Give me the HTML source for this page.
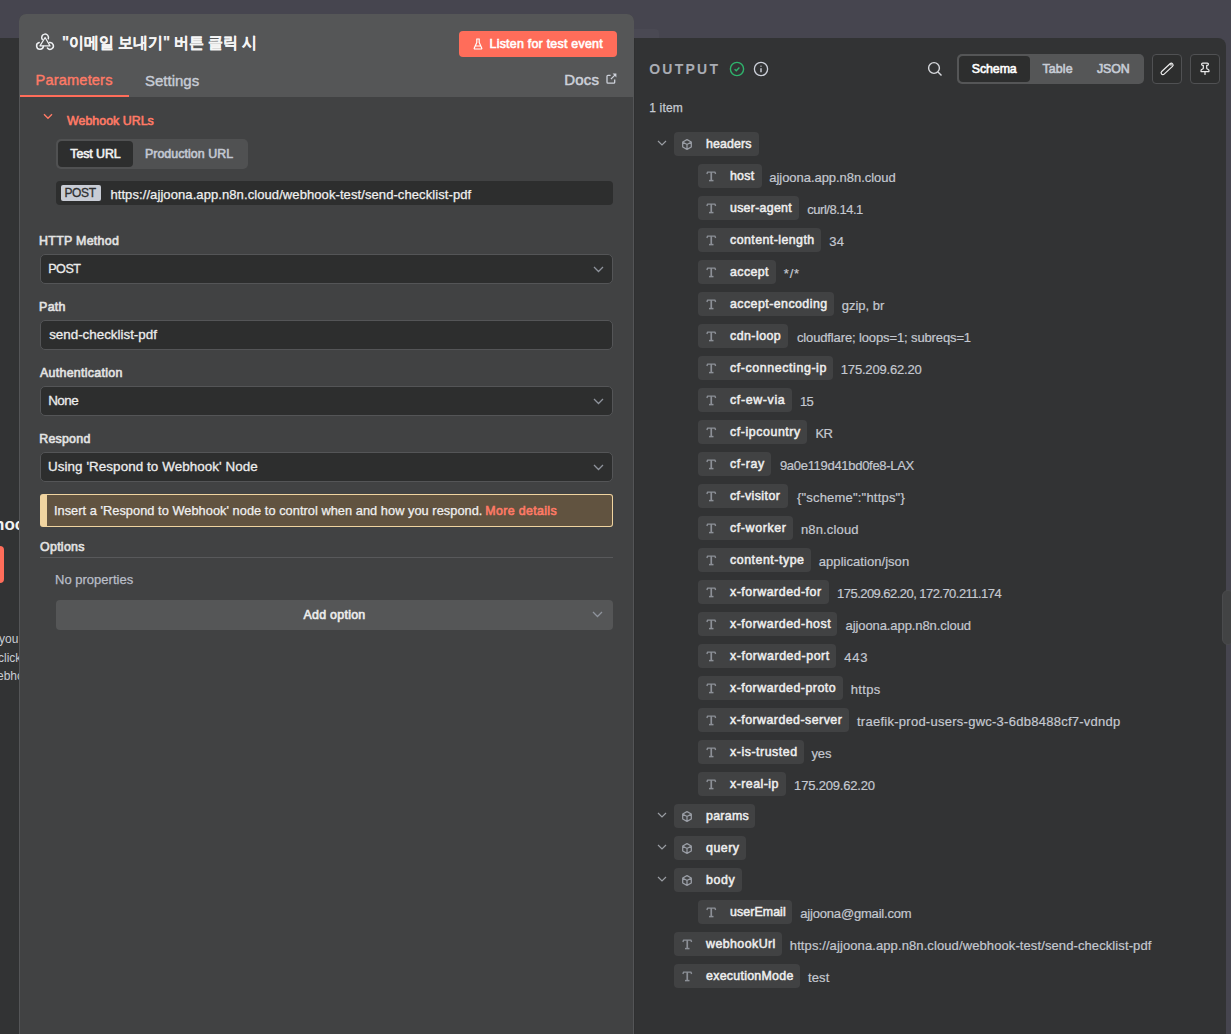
<!DOCTYPE html>
<html><head><meta charset="utf-8">
<style>
*{box-sizing:border-box;margin:0;padding:0}
html,body{width:1231px;height:1034px;overflow:hidden}
body{position:relative;background:#323334;font-family:"Liberation Sans",sans-serif;color:#e6e6e6}
.abs{position:absolute}
#topbar{position:absolute;left:0;top:0;width:1231px;height:38px;background:#46454f}
#topghost{position:absolute;left:634px;top:29px;width:25px;height:9px;background:#4a4953;border-top-right-radius:4px}
#rstrip{position:absolute;left:1190px;top:38px;width:41px;height:996px;background:#46454f}
#handle{position:absolute;left:1222px;top:590px;width:12px;height:55px;background:#424344;border-radius:6px;border:1px solid #4a4b4d}
/* left canvas peek */
#peek1{position:absolute;left:-6px;top:515px;font-size:17px;font-weight:700;color:#f2f2f2;white-space:nowrap}
#peekbtn{position:absolute;left:-10px;top:546px;width:14px;height:37px;background:#ff6d5a;border-radius:4px}
.peekt{position:absolute;font-size:12px;color:#c9ccd3;white-space:nowrap}
/* output panel */
#out{position:absolute;left:634px;top:38px;width:592px;height:996px;background:#323334;border-top-right-radius:8px}
/* left panel */
#ndv{position:absolute;left:19px;top:14px;width:615px;height:1030px;background:#414243;border-top-left-radius:7px;border-top-right-radius:7px;overflow:hidden}
#ndvhead{position:absolute;left:0;top:0;width:615px;height:83px;background:#555657}
#ndvrline{position:absolute;left:614px;top:83px;width:1px;height:960px;background:#545557}
.title{position:absolute;top:19px;font-size:16px;font-weight:700;color:#f5f5f5;white-space:nowrap;-webkit-text-stroke-width:0.15px}
.btn-listen{position:absolute;left:440px;top:17px;width:158px;height:26px;background:#ff6d5a;border-radius:4px;color:#fff;font-size:12.4px;font-weight:400;-webkit-text-stroke-width:0.6px;white-space:nowrap}
.btn-listen span{position:absolute;top:6px}
.btn-listen svg{position:absolute;left:14px;top:7px}
.tab{position:absolute;top:57.6px;font-size:14.6px;white-space:nowrap;-webkit-text-stroke-width:0.4px}
.tab.act{color:#ff7a66}
.tab.in{color:#c7ccd6;font-size:15px}
#uline{position:absolute;left:1px;top:81px;width:109px;height:2px;background:#ff6d5a}
.docs{position:absolute;top:57.2px;font-size:15px;color:#cdd1da;-webkit-text-stroke-width:0.5px}
.lab{position:absolute;left:21px;font-size:12.4px;font-weight:400;-webkit-text-stroke-width:0.6px;color:#e3e3e3;white-space:nowrap}
.inp{position:absolute;left:21px;width:573px;height:30px;background:#2d2e2e;border:1px solid #545557;border-radius:5px}
.inp span{position:absolute;top:6.4px;font-size:13.4px;color:#ececec;white-space:nowrap;-webkit-text-stroke:0.3px #ececec}
.inp svg{position:absolute;right:8.5px;top:11px}
</style></head><body>
<div id="topbar"></div>
<div id="topghost"></div>
<div id="rstrip"></div>
<div id="out"></div><div class="abs" style="left:634px;top:38px;width:1px;height:996px;background:#2f3031"></div>
<div id="handle"></div>

<div id="peek1">hook</div>
<div id="peekbtn"></div>
<div class="peekt" style="left:-1px;top:632px">you</div>
<div class="peekt" style="left:-2px;top:651px">click</div>
<div class="peekt" style="left:-3px;top:669px">ebho</div>

<!-- OUTPUT header -->
<div class="abs" style="left:649.20px;letter-spacing:2.260px;top:61px;font-size:14px;font-weight:700;color:#a9acb3">OUTPUT</div>
<svg class="abs" style="left:729px;top:61px" width="16" height="16" viewBox="0 0 16 16"><circle cx="8" cy="8" r="6.6" fill="none" stroke="#2fb36c" stroke-width="1.4"/><path d="M5.6 8.2l1.7 1.6 3.1-3.2" fill="none" stroke="#2fb36c" stroke-width="1.4"/></svg>
<svg class="abs" style="left:753px;top:61px" width="16" height="16" viewBox="0 0 16 16"><circle cx="8" cy="8" r="6.6" fill="none" stroke="#cdd1da" stroke-width="1.3"/><path d="M8 7.3v3.9" stroke="#cdd1da" stroke-width="1.4"/><path d="M7.3 5.2h1.4" stroke="#cdd1da" stroke-width="0.9"/></svg>
<div class="abs" style="left:649.20px;letter-spacing:0.200px;top:101px;font-size:12px;-webkit-text-stroke-width:0.25px;color:#c6cad2;white-space:nowrap">1 item</div>
<svg class="abs" style="left:927px;top:61px" width="16" height="16" viewBox="0 0 16 16"><circle cx="7" cy="7" r="5.4" fill="none" stroke="#d6d8dc" stroke-width="1.4"/><path d="M11 11l3.5 3.5" stroke="#d6d8dc" stroke-width="1.4"/></svg>
<div class="abs" style="left:957px;top:54px;width:187px;height:30px;background:#555657;border-radius:5px"></div>
<div class="abs" style="left:959px;top:56px;width:71px;height:26px;background:#2d2e2e;border-radius:4px"></div>
<div class="abs" style="left:971.80px;letter-spacing:-0.100px;top:62px;font-size:12.4px;font-weight:400;-webkit-text-stroke-width:0.6px;color:#fff">Schema</div>
<div class="abs" style="left:1042.50px;letter-spacing:0.100px;top:62px;font-size:12.4px;font-weight:400;-webkit-text-stroke-width:0.6px;color:#c7ccd6">Table</div>
<div class="abs" style="left:1096.90px;letter-spacing:-0.067px;top:62px;font-size:12.4px;font-weight:400;-webkit-text-stroke-width:0.6px;color:#c7ccd6">JSON</div>
<div class="abs" style="left:1152px;top:54px;width:30px;height:30px;background:#2d2e2e;border:1px solid #505153;border-radius:4px"></div>
<svg class="abs" style="left:1159px;top:61px" width="16" height="16" viewBox="0 0 16 16"><g transform="rotate(-43 8.1 7.95)"><rect x="0.6" y="6.15" width="15" height="3.6" rx="1.8" fill="none" stroke="#ececec" stroke-width="1.2"/></g><circle cx="12" cy="3.8" r="0.85" fill="#ececec"/></svg>
<div class="abs" style="left:1190px;top:54px;width:30px;height:30px;background:#2d2e2e;border:1px solid #505153;border-radius:4px"></div>
<svg class="abs" style="left:1197px;top:61px" width="16" height="16" viewBox="0 0 24 24" style="overflow:visible"><g transform="translate(1.8 1.4) scale(0.85 0.85)" fill="none" stroke="#ececec" stroke-width="2.1" stroke-linejoin="round" stroke-linecap="round"><line x1="12" x2="12" y1="17" y2="22"/><path d="M5 17h14v-1.76a2 2 0 0 0-1.11-1.79l-1.78-.9A2 2 0 0 1 15 10.76V6h1a2 2 0 0 0 0-4H8a2 2 0 0 0 0 4h1v4.76a2 2 0 0 1-1.11 1.79l-1.78.9A2 2 0 0 0 5 15.24Z"/></g></svg>

<style>
.row{position:absolute;height:24px;white-space:nowrap;display:flex;align-items:flex-start}
.pill{position:relative;display:block;height:24px;background:#414243;border-radius:4px;padding-left:32px;padding-right:7px}
.pill .k{display:block;padding-top:5px;line-height:14px;font-size:12.4px;font-weight:400;color:#eeeeee;-webkit-text-stroke:0.5px #eeeeee}
.pill svg.ti{position:absolute;left:8px;top:6.8px}
.pill svg.ci{position:absolute;left:7px;top:5.5px}
.v{display:block;padding-top:6px;line-height:15px;font-size:13px;color:#c4c8d0;-webkit-text-stroke:0.2px #c4c8d0}
.tchw{position:absolute;line-height:0}
</style>
<div class="tchw" style="top:140px;left:657px"><svg class="tch" width="10" height="6" viewBox="0 0 10 6"><path d="M1 1l4 4 4-4" fill="none" stroke="#9a9da3" stroke-width="1.2"/></svg></div><div class="row" style="top:132px;left:674px"><span class="pill" style="width:85px"><svg class="ci" width="12" height="13" viewBox="0 0 12 13"><path d="M6 1.6 10.3 4v5L6 11.4 1.7 9V4z M1.7 4 6 6.5 10.3 4M6 6.5v4.9" fill="none" stroke="#9a9ea6" stroke-width="1.25" stroke-linejoin="round"/></svg><span class="k" style="letter-spacing:0.117px">headers</span></span></div>
<div class="row" style="top:164px;left:698px"><span class="pill" style="width:64px"><svg class="ti" width="11" height="11" viewBox="0 0 11 11"><g fill="none" stroke="#8c9097" stroke-linecap="butt"><path d="M0.9 2.9 L1.6 1.1 H8.9 L9.6 2.9" stroke-width="1.4" stroke-linejoin="round"/><path d="M5.25 1.1V9.6" stroke-width="1.7"/><path d="M3 9.6H7.5" stroke-width="1.5"/></g></svg><span class="k" style="letter-spacing:0.233px">host</span></span><span class="v" style="margin-left:7.3px;letter-spacing:-0.045px">ajjoona.app.n8n.cloud</span></div>
<div class="row" style="top:196px;left:698px"><span class="pill" style="width:101px"><svg class="ti" width="11" height="11" viewBox="0 0 11 11"><g fill="none" stroke="#8c9097" stroke-linecap="butt"><path d="M0.9 2.9 L1.6 1.1 H8.9 L9.6 2.9" stroke-width="1.4" stroke-linejoin="round"/><path d="M5.25 1.1V9.6" stroke-width="1.7"/><path d="M3 9.6H7.5" stroke-width="1.5"/></g></svg><span class="k" style="letter-spacing:0.267px">user-agent</span></span><span class="v" style="margin-left:8.3px;letter-spacing:-0.470px">curl/8.14.1</span></div>
<div class="row" style="top:228px;left:698px"><span class="pill" style="width:123px"><svg class="ti" width="11" height="11" viewBox="0 0 11 11"><g fill="none" stroke="#8c9097" stroke-linecap="butt"><path d="M0.9 2.9 L1.6 1.1 H8.9 L9.6 2.9" stroke-width="1.4" stroke-linejoin="round"/><path d="M5.25 1.1V9.6" stroke-width="1.7"/><path d="M3 9.6H7.5" stroke-width="1.5"/></g></svg><span class="k" style="letter-spacing:0.438px">content-length</span></span><span class="v" style="margin-left:8.2px;letter-spacing:0.300px">34</span></div>
<div class="row" style="top:260px;left:698px"><span class="pill" style="width:78px"><svg class="ti" width="11" height="11" viewBox="0 0 11 11"><g fill="none" stroke="#8c9097" stroke-linecap="butt"><path d="M0.9 2.9 L1.6 1.1 H8.9 L9.6 2.9" stroke-width="1.4" stroke-linejoin="round"/><path d="M5.25 1.1V9.6" stroke-width="1.7"/><path d="M3 9.6H7.5" stroke-width="1.5"/></g></svg><span class="k" style="letter-spacing:0.400px">accept</span></span><span class="v" style="margin-left:7.8px;letter-spacing:0.800px">*/*</span></div>
<div class="row" style="top:292px;left:698px"><span class="pill" style="width:136px"><svg class="ti" width="11" height="11" viewBox="0 0 11 11"><g fill="none" stroke="#8c9097" stroke-linecap="butt"><path d="M0.9 2.9 L1.6 1.1 H8.9 L9.6 2.9" stroke-width="1.4" stroke-linejoin="round"/><path d="M5.25 1.1V9.6" stroke-width="1.7"/><path d="M3 9.6H7.5" stroke-width="1.5"/></g></svg><span class="k" style="letter-spacing:0.443px">accept-encoding</span></span><span class="v" style="margin-left:7.8px;letter-spacing:-0.014px">gzip, br</span></div>
<div class="row" style="top:324px;left:698px"><span class="pill" style="width:90px"><svg class="ti" width="11" height="11" viewBox="0 0 11 11"><g fill="none" stroke="#8c9097" stroke-linecap="butt"><path d="M0.9 2.9 L1.6 1.1 H8.9 L9.6 2.9" stroke-width="1.4" stroke-linejoin="round"/><path d="M5.25 1.1V9.6" stroke-width="1.7"/><path d="M3 9.6H7.5" stroke-width="1.5"/></g></svg><span class="k" style="letter-spacing:0.457px">cdn-loop</span></span><span class="v" style="margin-left:8.9px;letter-spacing:-0.124px">cloudflare; loops=1; subreqs=1</span></div>
<div class="row" style="top:356px;left:698px"><span class="pill" style="width:135px"><svg class="ti" width="11" height="11" viewBox="0 0 11 11"><g fill="none" stroke="#8c9097" stroke-linecap="butt"><path d="M0.9 2.9 L1.6 1.1 H8.9 L9.6 2.9" stroke-width="1.4" stroke-linejoin="round"/><path d="M5.25 1.1V9.6" stroke-width="1.7"/><path d="M3 9.6H7.5" stroke-width="1.5"/></g></svg><span class="k" style="letter-spacing:0.593px">cf-connecting-ip</span></span><span class="v" style="margin-left:7.8px;letter-spacing:-0.183px">175.209.62.20</span></div>
<div class="row" style="top:388px;left:698px"><span class="pill" style="width:94px"><svg class="ti" width="11" height="11" viewBox="0 0 11 11"><g fill="none" stroke="#8c9097" stroke-linecap="butt"><path d="M0.9 2.9 L1.6 1.1 H8.9 L9.6 2.9" stroke-width="1.4" stroke-linejoin="round"/><path d="M5.25 1.1V9.6" stroke-width="1.7"/><path d="M3 9.6H7.5" stroke-width="1.5"/></g></svg><span class="k" style="letter-spacing:0.638px">cf-ew-via</span></span><span class="v" style="margin-left:8.1px;letter-spacing:-0.800px">15</span></div>
<div class="row" style="top:420px;left:698px"><span class="pill" style="width:109px"><svg class="ti" width="11" height="11" viewBox="0 0 11 11"><g fill="none" stroke="#8c9097" stroke-linecap="butt"><path d="M0.9 2.9 L1.6 1.1 H8.9 L9.6 2.9" stroke-width="1.4" stroke-linejoin="round"/><path d="M5.25 1.1V9.6" stroke-width="1.7"/><path d="M3 9.6H7.5" stroke-width="1.5"/></g></svg><span class="k" style="letter-spacing:0.564px">cf-ipcountry</span></span><span class="v" style="margin-left:8.6px;letter-spacing:-0.800px">KR</span></div>
<div class="row" style="top:452px;left:698px"><span class="pill" style="width:73px"><svg class="ti" width="11" height="11" viewBox="0 0 11 11"><g fill="none" stroke="#8c9097" stroke-linecap="butt"><path d="M0.9 2.9 L1.6 1.1 H8.9 L9.6 2.9" stroke-width="1.4" stroke-linejoin="round"/><path d="M5.25 1.1V9.6" stroke-width="1.7"/><path d="M3 9.6H7.5" stroke-width="1.5"/></g></svg><span class="k" style="letter-spacing:0.660px">cf-ray</span></span><span class="v" style="margin-left:8.9px;letter-spacing:-0.295px">9a0e119d41bd0fe8-LAX</span></div>
<div class="row" style="top:484px;left:698px"><span class="pill" style="width:90px"><svg class="ti" width="11" height="11" viewBox="0 0 11 11"><g fill="none" stroke="#8c9097" stroke-linecap="butt"><path d="M0.9 2.9 L1.6 1.1 H8.9 L9.6 2.9" stroke-width="1.4" stroke-linejoin="round"/><path d="M5.25 1.1V9.6" stroke-width="1.7"/><path d="M3 9.6H7.5" stroke-width="1.5"/></g></svg><span class="k" style="letter-spacing:0.411px">cf-visitor</span></span><span class="v" style="margin-left:8.9px;letter-spacing:0.200px">{&quot;scheme&quot;:&quot;https&quot;}</span></div>
<div class="row" style="top:516px;left:698px"><span class="pill" style="width:95px"><svg class="ti" width="11" height="11" viewBox="0 0 11 11"><g fill="none" stroke="#8c9097" stroke-linecap="butt"><path d="M0.9 2.9 L1.6 1.1 H8.9 L9.6 2.9" stroke-width="1.4" stroke-linejoin="round"/><path d="M5.25 1.1V9.6" stroke-width="1.7"/><path d="M3 9.6H7.5" stroke-width="1.5"/></g></svg><span class="k" style="letter-spacing:0.612px">cf-worker</span></span><span class="v" style="margin-left:8.0px;letter-spacing:0.138px">n8n.cloud</span></div>
<div class="row" style="top:548px;left:698px"><span class="pill" style="width:113px"><svg class="ti" width="11" height="11" viewBox="0 0 11 11"><g fill="none" stroke="#8c9097" stroke-linecap="butt"><path d="M0.9 2.9 L1.6 1.1 H8.9 L9.6 2.9" stroke-width="1.4" stroke-linejoin="round"/><path d="M5.25 1.1V9.6" stroke-width="1.7"/><path d="M3 9.6H7.5" stroke-width="1.5"/></g></svg><span class="k" style="letter-spacing:0.527px">content-type</span></span><span class="v" style="margin-left:7.8px;letter-spacing:0.047px">application/json</span></div>
<div class="row" style="top:580px;left:698px"><span class="pill" style="width:131px"><svg class="ti" width="11" height="11" viewBox="0 0 11 11"><g fill="none" stroke="#8c9097" stroke-linecap="butt"><path d="M0.9 2.9 L1.6 1.1 H8.9 L9.6 2.9" stroke-width="1.4" stroke-linejoin="round"/><path d="M5.25 1.1V9.6" stroke-width="1.7"/><path d="M3 9.6H7.5" stroke-width="1.5"/></g></svg><span class="k" style="letter-spacing:0.500px">x-forwarded-for</span></span><span class="v" style="margin-left:8.1px;letter-spacing:-0.543px">175.209.62.20, 172.70.211.174</span></div>
<div class="row" style="top:612px;left:698px"><span class="pill" style="width:139px"><svg class="ti" width="11" height="11" viewBox="0 0 11 11"><g fill="none" stroke="#8c9097" stroke-linecap="butt"><path d="M0.9 2.9 L1.6 1.1 H8.9 L9.6 2.9" stroke-width="1.4" stroke-linejoin="round"/><path d="M5.25 1.1V9.6" stroke-width="1.7"/><path d="M3 9.6H7.5" stroke-width="1.5"/></g></svg><span class="k" style="letter-spacing:0.507px">x-forwarded-host</span></span><span class="v" style="margin-left:8.5px;letter-spacing:-0.085px">ajjoona.app.n8n.cloud</span></div>
<div class="row" style="top:644px;left:698px"><span class="pill" style="width:138px"><svg class="ti" width="11" height="11" viewBox="0 0 11 11"><g fill="none" stroke="#8c9097" stroke-linecap="butt"><path d="M0.9 2.9 L1.6 1.1 H8.9 L9.6 2.9" stroke-width="1.4" stroke-linejoin="round"/><path d="M5.25 1.1V9.6" stroke-width="1.7"/><path d="M3 9.6H7.5" stroke-width="1.5"/></g></svg><span class="k" style="letter-spacing:0.553px">x-forwarded-port</span></span><span class="v" style="margin-left:8.3px;letter-spacing:0.800px">443</span></div>
<div class="row" style="top:676px;left:698px"><span class="pill" style="width:145px"><svg class="ti" width="11" height="11" viewBox="0 0 11 11"><g fill="none" stroke="#8c9097" stroke-linecap="butt"><path d="M0.9 2.9 L1.6 1.1 H8.9 L9.6 2.9" stroke-width="1.4" stroke-linejoin="round"/><path d="M5.25 1.1V9.6" stroke-width="1.7"/><path d="M3 9.6H7.5" stroke-width="1.5"/></g></svg><span class="k" style="letter-spacing:0.487px">x-forwarded-proto</span></span><span class="v" style="margin-left:7.8px;letter-spacing:0.325px">https</span></div>
<div class="row" style="top:708px;left:698px"><span class="pill" style="width:151px"><svg class="ti" width="11" height="11" viewBox="0 0 11 11"><g fill="none" stroke="#8c9097" stroke-linecap="butt"><path d="M0.9 2.9 L1.6 1.1 H8.9 L9.6 2.9" stroke-width="1.4" stroke-linejoin="round"/><path d="M5.25 1.1V9.6" stroke-width="1.7"/><path d="M3 9.6H7.5" stroke-width="1.5"/></g></svg><span class="k" style="letter-spacing:0.459px">x-forwarded-server</span></span><span class="v" style="margin-left:8.0px;letter-spacing:0.260px">traefik-prod-users-gwc-3-6db8488cf7-vdndp</span></div>
<div class="row" style="top:740px;left:698px"><span class="pill" style="width:106px"><svg class="ti" width="11" height="11" viewBox="0 0 11 11"><g fill="none" stroke="#8c9097" stroke-linecap="butt"><path d="M0.9 2.9 L1.6 1.1 H8.9 L9.6 2.9" stroke-width="1.4" stroke-linejoin="round"/><path d="M5.25 1.1V9.6" stroke-width="1.7"/><path d="M3 9.6H7.5" stroke-width="1.5"/></g></svg><span class="k" style="letter-spacing:0.527px">x-is-trusted</span></span><span class="v" style="margin-left:7.5px;letter-spacing:-0.150px">yes</span></div>
<div class="row" style="top:772px;left:698px"><span class="pill" style="width:88px"><svg class="ti" width="11" height="11" viewBox="0 0 11 11"><g fill="none" stroke="#8c9097" stroke-linecap="butt"><path d="M0.9 2.9 L1.6 1.1 H8.9 L9.6 2.9" stroke-width="1.4" stroke-linejoin="round"/><path d="M5.25 1.1V9.6" stroke-width="1.7"/><path d="M3 9.6H7.5" stroke-width="1.5"/></g></svg><span class="k" style="letter-spacing:0.450px">x-real-ip</span></span><span class="v" style="margin-left:8.1px;letter-spacing:-0.183px">175.209.62.20</span></div>
<div class="tchw" style="top:812px;left:657px"><svg class="tch" width="10" height="6" viewBox="0 0 10 6"><path d="M1 1l4 4 4-4" fill="none" stroke="#9a9da3" stroke-width="1.2"/></svg></div><div class="row" style="top:804px;left:674px"><span class="pill" style="width:81px"><svg class="ci" width="12" height="13" viewBox="0 0 12 13"><path d="M6 1.6 10.3 4v5L6 11.4 1.7 9V4z M1.7 4 6 6.5 10.3 4M6 6.5v4.9" fill="none" stroke="#9a9ea6" stroke-width="1.25" stroke-linejoin="round"/></svg><span class="k" style="letter-spacing:0.280px">params</span></span></div>
<div class="tchw" style="top:844px;left:657px"><svg class="tch" width="10" height="6" viewBox="0 0 10 6"><path d="M1 1l4 4 4-4" fill="none" stroke="#9a9da3" stroke-width="1.2"/></svg></div><div class="row" style="top:836px;left:674px"><span class="pill" style="width:72px"><svg class="ci" width="12" height="13" viewBox="0 0 12 13"><path d="M6 1.6 10.3 4v5L6 11.4 1.7 9V4z M1.7 4 6 6.5 10.3 4M6 6.5v4.9" fill="none" stroke="#9a9ea6" stroke-width="1.25" stroke-linejoin="round"/></svg><span class="k" style="letter-spacing:0.500px">query</span></span></div>
<div class="tchw" style="top:876px;left:657px"><svg class="tch" width="10" height="6" viewBox="0 0 10 6"><path d="M1 1l4 4 4-4" fill="none" stroke="#9a9da3" stroke-width="1.2"/></svg></div><div class="row" style="top:868px;left:674px"><span class="pill" style="width:68px"><svg class="ci" width="12" height="13" viewBox="0 0 12 13"><path d="M6 1.6 10.3 4v5L6 11.4 1.7 9V4z M1.7 4 6 6.5 10.3 4M6 6.5v4.9" fill="none" stroke="#9a9ea6" stroke-width="1.25" stroke-linejoin="round"/></svg><span class="k" style="letter-spacing:0.633px">body</span></span></div>
<div class="row" style="top:900px;left:698px"><span class="pill" style="width:94px"><svg class="ti" width="11" height="11" viewBox="0 0 11 11"><g fill="none" stroke="#8c9097" stroke-linecap="butt"><path d="M0.9 2.9 L1.6 1.1 H8.9 L9.6 2.9" stroke-width="1.4" stroke-linejoin="round"/><path d="M5.25 1.1V9.6" stroke-width="1.7"/><path d="M3 9.6H7.5" stroke-width="1.5"/></g></svg><span class="k" style="letter-spacing:0.075px">userEmail</span></span><span class="v" style="margin-left:8.3px;letter-spacing:-0.188px">ajjoona@gmail.com</span></div>
<div class="row" style="top:932px;left:674px"><span class="pill" style="width:108px"><svg class="ti" width="11" height="11" viewBox="0 0 11 11"><g fill="none" stroke="#8c9097" stroke-linecap="butt"><path d="M0.9 2.9 L1.6 1.1 H8.9 L9.6 2.9" stroke-width="1.4" stroke-linejoin="round"/><path d="M5.25 1.1V9.6" stroke-width="1.7"/><path d="M3 9.6H7.5" stroke-width="1.5"/></g></svg><span class="k" style="letter-spacing:0.433px">webhookUrl</span></span><span class="v" style="margin-left:7.8px;letter-spacing:0.100px">https://ajjoona.app.n8n.cloud/webhook-test/send-checklist-pdf</span></div>
<div class="row" style="top:964px;left:674px"><span class="pill" style="width:126px"><svg class="ti" width="11" height="11" viewBox="0 0 11 11"><g fill="none" stroke="#8c9097" stroke-linecap="butt"><path d="M0.9 2.9 L1.6 1.1 H8.9 L9.6 2.9" stroke-width="1.4" stroke-linejoin="round"/><path d="M5.25 1.1V9.6" stroke-width="1.7"/><path d="M3 9.6H7.5" stroke-width="1.5"/></g></svg><span class="k" style="letter-spacing:0.275px">executionMode</span></span><span class="v" style="margin-left:8.0px;letter-spacing:0.100px">test</span></div>

<!-- left NDV panel -->
<div id="ndv">
  <div id="ndvhead"></div>
  <div id="ndvrline"></div><div class="abs" style="left:0;top:83px;width:1px;height:960px;background:#545557"></div>
  <svg class="abs" style="left:13px;top:15px" width="26" height="26" viewBox="0 0 26 26"><g fill="none" stroke="#eef0f3" stroke-linecap="round" stroke-linejoin="round"><path stroke-width="1.5" d="M10.315 10.451A3.4 3.4 0 1 1 16.295 9.663"/><path stroke-width="1.5" d="M11.392 17.137A3.4 3.4 0 1 1 7.177 13.601"/><path stroke-width="1.5" d="M17.41 13.552A3.4 3.4 0 1 1 15.395 19.085"/><path d="M13.1 8.5L8 16.9H18Z" stroke-width="1.2"/></g></svg>
  <div class="title" style="left:43.00px;letter-spacing:0px;transform:scaleX(0.935);transform-origin:0 0">"이메일 보내기" 버튼 클릭 시</div>
  <div class="btn-listen"><svg width="10" height="12" viewBox="0 0 10 12"><path d="M3.3 1h3.4M3.8 1v3.6L1.2 10.2a.6.6 0 0 0 .5.8h6.6a.6.6 0 0 0 .5-.8L6.2 4.6V1M2.3 8h5.4" fill="none" stroke="#fff" stroke-width="1.2" stroke-linejoin="round"/></svg><span style="left:30.50px;letter-spacing:0.250px">Listen for test event</span></div>
  <div class="tab act" style="left:16.60px;letter-spacing:0.156px">Parameters</div>
  <div class="tab in" style="left:126.00px;letter-spacing:0.000px">Settings</div>
  <div id="uline"></div>
  <div class="docs" style="left:545.30px;letter-spacing:0.200px">Docs</div>
  <svg class="abs" style="left:586.5px;top:59.2px" width="11" height="11" viewBox="0 0 11 11"><g fill="none" stroke="#cdd1da" stroke-width="1.3" stroke-linejoin="round"><path d="M4.6 2.4H1.9a.9.9 0 0 0-.9.9v5.9a.9.9 0 0 0 .9.9h5.9a.9.9 0 0 0 .9-.9V6.4"/><path d="M4.9 6.1 9.6 1.4"/></g><path d="M6.6 0.6H10.4V4.4z" fill="#cdd1da"/></svg>

  <!-- webhook urls -->
  <svg class="abs" style="left:24px;top:99px" width="10" height="7" viewBox="0 0 10 7"><path d="M1 1.2l4 4 4-4" fill="none" stroke="#ff7a66" stroke-width="1.4"/></svg>
  <div class="abs" style="left:48.00px;letter-spacing:0.018px;top:100px;font-size:12.4px;font-weight:400;-webkit-text-stroke-width:0.6px;color:#ff7a66">Webhook URLs</div>
  <div class="abs" style="left:37px;top:125px;width:192px;height:30px;background:#505152;border-radius:5px"></div>
  <div class="abs" style="left:39px;top:127px;width:75px;height:26px;background:#2d2e2e;border-radius:4px"></div>
  <div class="abs" style="left:51.30px;letter-spacing:-0.086px;top:133px;font-size:12.4px;font-weight:400;-webkit-text-stroke-width:0.6px;color:#f2f2f2">Test URL</div>
  <div class="abs" style="left:125.90px;letter-spacing:0.054px;top:133px;font-size:12.4px;font-weight:400;-webkit-text-stroke-width:0.6px;color:#c3c8d2;white-space:nowrap">Production URL</div>
  <div class="abs" style="left:37px;top:167px;width:557px;height:24px;background:#2d2e2e;border-radius:4px"></div>
  <div class="abs" style="left:42px;top:171px;width:40px;height:16px;background:#c8ccd5;border-radius:2px"></div>
  <div class="abs" style="left:45.40px;letter-spacing:-0.367px;top:172px;font-size:12px;-webkit-text-stroke-width:0.3px;color:#2e2f30">POST</div>
  <div class="abs" style="left:91.40px;letter-spacing:0.087px;top:173px;font-size:13px;-webkit-text-stroke-width:0.25px;color:#f0f0f0;white-space:nowrap">https://ajjoona.app.n8n.cloud/webhook-test/send-checklist-pdf</div>

  <div class="lab" style="top:220px;left:20.10px;letter-spacing:0.280px">HTTP Method</div>
  <div class="inp" style="top:240px"><span style="left:7.20px;letter-spacing:-0.500px;font-size:12.6px;top:6.6px">POST</span><svg width="11" height="7" viewBox="0 0 11 7"><path d="M1 1l4.5 4.5L10 1" fill="none" stroke="#8e939c" stroke-width="1.3"/></svg></div>
  <div class="lab" style="top:286px;left:20.10px;letter-spacing:0.267px">Path</div>
  <div class="inp" style="top:306px"><span style="left:8.20px;letter-spacing:-0.012px">send-checklist-pdf</span></div>
  <div class="lab" style="top:352px;left:21.00px;letter-spacing:0.292px">Authentication</div>
  <div class="inp" style="top:372px"><span style="left:7.20px;letter-spacing:-0.500px">None</span><svg width="11" height="7" viewBox="0 0 11 7"><path d="M1 1l4.5 4.5L10 1" fill="none" stroke="#8e939c" stroke-width="1.3"/></svg></div>
  <div class="lab" style="top:418px;left:20.20px;letter-spacing:0.250px">Respond</div>
  <div class="inp" style="top:438px"><span style="left:7.00px;letter-spacing:0.080px">Using 'Respond to Webhook' Node</span><svg width="11" height="7" viewBox="0 0 11 7"><path d="M1 1l4.5 4.5L10 1" fill="none" stroke="#8e939c" stroke-width="1.3"/></svg></div>

  <div class="abs" style="left:21px;top:480px;width:573px;height:33px;background:#615340;border:1px solid #f0d4a0;border-left:7px solid #f0d4a0;border-radius:3px"></div>
  <div class="abs" style="left:34.90px;letter-spacing:0.039px;top:489px;font-size:12.8px;-webkit-text-stroke-width:0.25px;color:#f0f0f0;white-space:nowrap">Insert a 'Respond to Webhook' node to control when and how you respond.</div><div class="abs" style="left:466.30px;letter-spacing:0.345px;top:490px;font-size:12.4px;font-weight:400;-webkit-text-stroke-width:0.6px;color:#ff7a66;white-space:nowrap">More details</div>

  <div class="lab" style="top:526px;left:21.00px;letter-spacing:0.300px">Options</div>
  <div class="abs" style="left:21px;top:543px;width:573px;height:1px;background:#58595b"></div>
  <div class="abs" style="left:36.00px;letter-spacing:0.017px;top:558.3px;font-size:13px;-webkit-text-stroke-width:0.25px;color:#b9bec8;white-space:nowrap">No properties</div>
  <div class="abs" style="left:37px;top:586px;width:557px;height:30px;background:#555657;border-radius:4px"></div>
  <div class="abs" style="left:284.50px;letter-spacing:0.278px;top:594px;font-size:12.4px;font-weight:400;-webkit-text-stroke-width:0.6px;color:#ececec;white-space:nowrap">Add option</div>
  <svg class="abs" style="left:573px;top:597px" width="11" height="7" viewBox="0 0 11 7"><path d="M1 1l4.5 4.5L10 1" fill="none" stroke="#8e939c" stroke-width="1.3"/></svg>
</div>
</body></html>
